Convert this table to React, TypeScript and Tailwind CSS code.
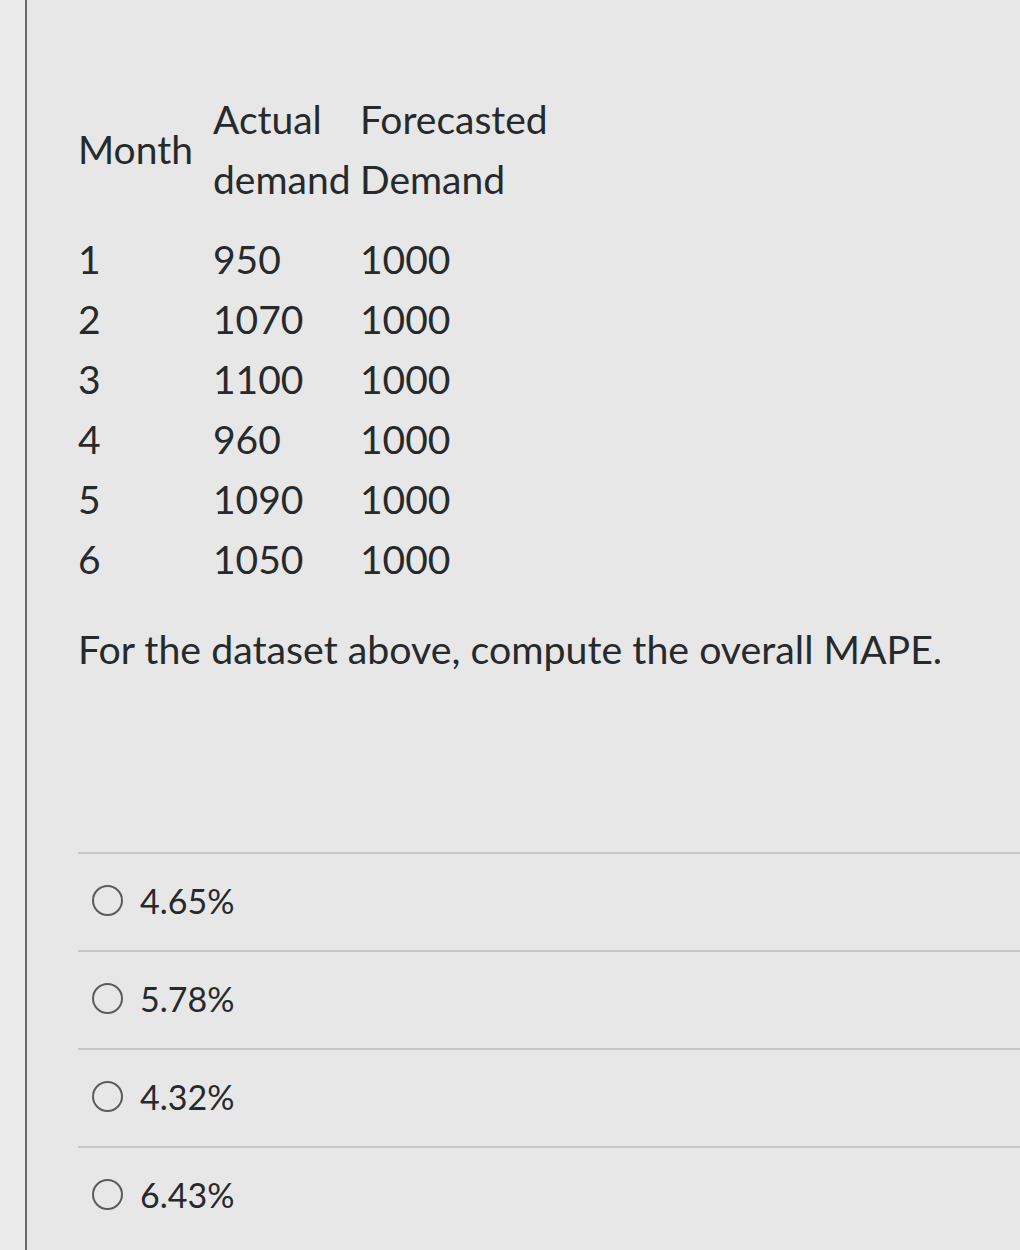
import { Fragment } from "react";

const rows = [
  ["1", "950", "1000"],
  ["2", "1070", "1000"],
  ["3", "1100", "1000"],
  ["4", "960", "1000"],
  ["5", "1090", "1000"],
  ["6", "1050", "1000"],
];

const options = ["4.65%", "5.78%", "4.32%", "6.43%"];

export default function App() {
  return (
    <div
      className="flex h-[1250px] w-[1020px] overflow-hidden bg-[#e6e7e6] text-[#262a2c]"
      style={{ fontFamily: "Lato, 'Open Sans', sans-serif" }}
    >
      <div className="w-[25px] shrink-0 bg-[#e9eae9]" />
      <div className="w-[2px] shrink-0 bg-[#6a6c6c]" />
      <div className="flex-1 pt-[89px]">
        <div className="pl-[51px]">
          <div className="grid grid-cols-[135px_147px_auto] text-[39px] leading-[60px]">
            <div className="row-span-2 self-center">Month</div>
            <div>Actual</div>
            <div>Forecasted</div>
            <div>demand</div>
            <div>Demand</div>
          </div>
          <div className="mt-[20px] grid grid-cols-[135px_147px_auto] text-[39px] leading-[60px]">
            {rows.map((r) => (
              <Fragment key={r[0]}>
                <div>{r[0]}</div>
                <div>{r[1]}</div>
                <div>{r[2]}</div>
              </Fragment>
            ))}
          </div>
          <p className="mt-[30px] text-[39.3px] leading-[60px]">
            For the dataset above, compute the overall MAPE.
          </p>
        </div>

        <div className="ml-[51px] mt-[173px]">
          {options.map((o) => (
            <div
              key={o}
              className="flex h-[98px] items-center border-t-2 border-[#c6c8c7] pb-[3px] pl-[14px]"
            >
              <span className="h-[31px] w-[31px] rounded-full border-2 border-[#5a5c5c]" />
              <span className="ml-[17px] text-[34px]">{o}</span>
            </div>
          ))}
        </div>
      </div>
    </div>
  );
}
